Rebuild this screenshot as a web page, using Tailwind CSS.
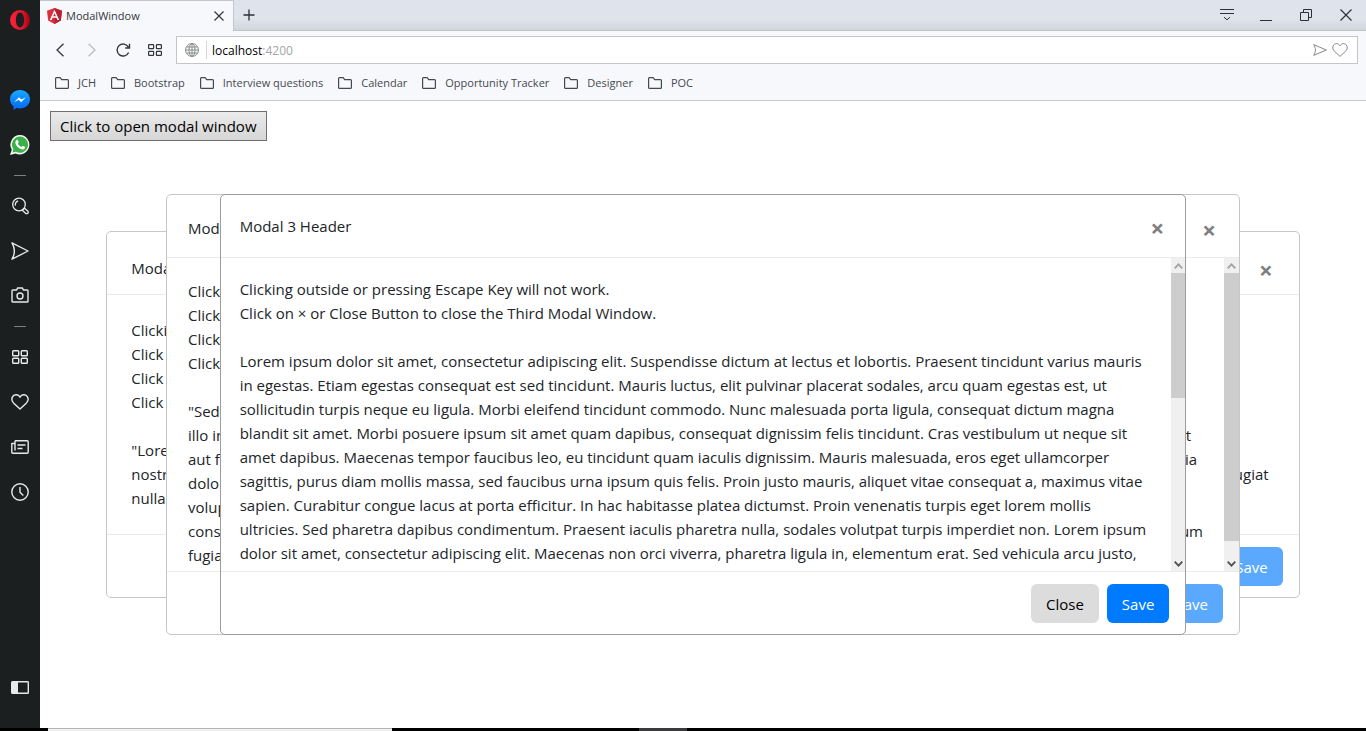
<!DOCTYPE html>
<html lang="en">
<head>
<meta charset="utf-8">
<title>ModalWindow</title>
<script src="https://cdn.jsdelivr.net/npm/@tailwindcss/browser@4"></script>
</head>
<body class="flex h-screen flex-col overflow-hidden bg-white font-['Open_Sans','Noto_Sans',sans-serif] text-[#212529]">
<div class="flex min-h-0 flex-1">

  <!-- Browser sidebar -->
  <nav aria-label="Sidebar" class="flex w-10 shrink-0 flex-col bg-[#1b1f1f] text-[#e8eaea]">
    <button aria-label="Opera menu" class="flex h-10 items-center justify-center">
      <svg width="20" height="20" viewBox="0 0 20 20"><defs><linearGradient id="op" x1="0" y1="0" x2="1" y2="0"><stop offset="0" stop-color="#fb2338"/><stop offset=".6" stop-color="#e3152c"/><stop offset="1" stop-color="#9c0613"/></linearGradient></defs><path fill="url(#op)" fill-rule="evenodd" d="M10 0a10 10 0 1 0 0 20 10 10 0 0 0 0-20zm0 2.600c2.300 0 4.100 3.200 4.100 7.400s-1.800 7.400-4.100 7.400S5.900 14.200 5.900 10 7.700 2.600 10 2.600z"/></svg>
    </button>
    <div class="h-[37px]"></div>
    <button aria-label="Messenger" class="flex h-[45px] items-center justify-center">
      <svg width="20" height="20" viewBox="0 0 20 20"><defs><linearGradient id="ms" x1="0" y1="0" x2="0" y2="1"><stop offset="0" stop-color="#1aa8ff"/><stop offset="1" stop-color="#0066f5"/></linearGradient></defs><path fill="url(#ms)" d="M10 0C4.400 0 0 4.100 0 9.200c0 2.900 1.300 5.400 3.500 7.100V20l3.300-1.900c1 .3 2.100.4 3.200.4 5.600 0 10-4.100 10-9.300S15.600 0 10 0z"/><path fill="#fff" d="M4.200 12.200 8.900 7.200l2.600 2.400 4.400-2.400-4.700 5-2.500-2.500z"/></svg>
    </button>
    <button aria-label="WhatsApp" class="flex h-[45px] items-center justify-center">
      <svg width="20" height="20" viewBox="0 0 20 20"><path fill="#f4fbf4" d="M10.200 0A9.700 9.700 0 0 0 1.800 14.700L0 20l5.600-1.500A9.700 9.700 0 1 0 10.200 0z"/><path fill="#3cb14a" d="M10.200 1.600a8.100 8.100 0 0 0-6.800 12.600l-1 3.400 3.500-.9a8.100 8.100 0 1 0 4.300-15.100z"/><path fill="#fff" d="M6.400 5.200c.5-.5 1.200-.5 1.400 0l.8 1.800c.2.500-.5 1.100-.8 1.500.8 1.700 2 2.800 3.800 3.500.4-.4.900-1.300 1.400-1.100l1.800.9c.5.300.2 1.200-.2 1.700-.8.900-2 1.100-3.200.7-3-.9-5-3-5.900-5.500-.3-1.300 0-2.600.9-3.500z"/></svg>
    </button>
    <div class="flex h-4 items-center justify-center"><span class="h-px w-3 bg-[#7c8080]"></span></div>
    <button aria-label="Search" class="flex h-[45px] items-center justify-center">
      <svg width="18" height="18" viewBox="0 0 18 18" fill="none" stroke="currentColor" stroke-width="1.300"><circle cx="8" cy="7.500" r="6.300"/><path d="M4.400 8.700c-.5-2.400.7-4.300 2.700-4.700"/><path d="m11.300 13.200 2.100-2 3.300 2.800c.8.700.7 1.600.1 2.200s-1.600.7-2.300 0z"/></svg>
    </button>
    <button aria-label="My Flow" class="flex h-[45px] items-center justify-center">
      <svg width="18" height="18" viewBox="0 0 18 18" fill="none" stroke="currentColor" stroke-width="1.400" stroke-linejoin="round"><path d="M1 .8 17 9 1 17.200C4 12 4 6 1 .8z"/></svg>
    </button>
    <button aria-label="Snapshot" class="flex h-[45px] items-center justify-center pb-[2px]">
      <svg width="18" height="16" viewBox="0 0 18 16" fill="none" stroke="currentColor" stroke-width="1.400" stroke-linejoin="round"><path d="M1.800 3h3.900L6.500 1h5l.8 2h3.900c.5 0 .8.300.8.800v10.400c0 .5-.3.800-.8.800H1.800c-.5 0-.8-.3-.8-.8V3.800c0-.5.3-.8.800-.8z"/><circle cx="9" cy="9" r="3"/></svg>
    </button>
    <div class="flex h-4 items-center justify-center"><span class="h-px w-3 bg-[#7c8080]"></span></div>
    <button aria-label="Speed Dial" class="flex h-[45px] items-center justify-center">
      <svg width="16" height="14" viewBox="0 0 16 14" fill="none" stroke="currentColor" stroke-width="1.400"><rect x=".7" y=".7" width="6" height="5" rx=".8"/><rect x="9.300" y=".7" width="6" height="5" rx=".8"/><rect x=".7" y="8.300" width="6" height="5" rx=".8"/><rect x="9.300" y="8.300" width="6" height="5" rx=".8"/></svg>
    </button>
    <button aria-label="Bookmarks" class="flex h-[45px] items-center justify-center">
      <svg width="18" height="16" viewBox="0 0 18 16" fill="none" stroke="currentColor" stroke-width="1.400" stroke-linejoin="round"><path d="M9 3.200C7.500.2 3.600.1 1.900 2.300.3 4.400.8 7 2.500 8.900L9 15l6.500-6.100c1.700-1.900 2.200-4.500.6-6.600C14.400.1 10.500.2 9 3.200z"/></svg>
    </button>
    <button aria-label="News" class="flex h-[45px] items-center justify-center">
      <svg width="18" height="14" viewBox="0 0 18 14" fill="none" stroke="currentColor" stroke-width="1.400" stroke-linejoin="round"><path d="M4 .8h12.200c.6 0 1 .3 1 1v10.400c0 .6-.4 1-1 1H1.800c-.6 0-1-.4-1-1V3.500H4M4 .8v9.700M6.500 5h8M6.500 8.500h5"/></svg>
    </button>
    <button aria-label="History" class="flex h-[45px] items-center justify-center">
      <svg width="18" height="18" viewBox="0 0 18 18" fill="none" stroke="currentColor" stroke-width="1.400"><circle cx="9" cy="9" r="8.200"/><path d="M9 4v5.200l3.300 3.300"/></svg>
    </button>
    <button aria-label="Toggle sidebar" class="mt-auto mb-[18px] flex h-[45px] items-center justify-center">
      <svg width="18" height="13" viewBox="0 0 18 13"><rect x=".7" y=".7" width="16.600" height="11.600" rx=".8" fill="none" stroke="currentColor" stroke-width="1.400"/><path fill="currentColor" d="M1 1h6v11H1z"/></svg>
    </button>
  </nav>

  <div class="flex min-w-0 flex-1 flex-col">
    <!-- Tab strip -->
    <header class="flex h-[31px] shrink-0 bg-linear-to-b from-[#dfe4ec] from-60% to-[#d0d5db] text-[#2c3038]">
      <div class="flex w-[194px] items-center border-t border-r border-[#c4c8cd] bg-[#f7f8fb] pr-[5px] pl-[7px]">
        <svg width="15" height="16" viewBox="0 0 15 16" class="shrink-0"><path fill="#dd2e3b" d="M7.500 0 15 2.700l-1.200 9.700L7.500 16l-6.300-3.600L0 2.700z"/><path fill="#b52231" d="M7.500 0 15 2.700l-1.200 9.700L7.500 16z"/><path fill="#fff" fill-rule="evenodd" d="m7.500 1.800 4.700 10.300h-1.800l-.9-2.400h-4l-.9 2.400H2.800zm0 3.400L6.100 8.300h2.800z"/></svg>
        <span class="ml-1 flex-1 text-[11px] text-[#33373d]">ModalWindow</span>
        <button aria-label="Close tab" class="p-1"><svg width="10" height="10" viewBox="0 0 10 10" stroke="#33373d" stroke-width="1.200"><path d="m.5.500 9 9M9.500.5l-9 9"/></svg></button>
      </div>
      <div class="flex flex-1 items-center border-b border-[#bfc4c9] pr-[14px] pl-[9px]">
        <button aria-label="New tab"><svg width="12" height="12" viewBox="0 0 12 12" stroke="currentColor" stroke-width="1.300"><path d="M6 .5v11M.5 6h11"/></svg></button>
        <div class="ml-auto flex items-center gap-7">
          <button aria-label="Tab menu" class="-mr-[2px]"><svg width="14" height="12" viewBox="0 0 14 12" fill="none" stroke="currentColor"><path d="M0 .5h14M0 4.500h14M4 8.200l3 2.600 3-2.600"/></svg></button>
          <button aria-label="Minimize"><svg width="12" height="12" viewBox="0 0 12 12" stroke="currentColor"><path d="M0 11.500h12"/></svg></button>
          <button aria-label="Restore"><svg width="12" height="12" viewBox="0 0 12 12" fill="none" stroke="currentColor"><path d="M.5 3.500h8v8h-8zM3.500 3.500v-3h8v8h-3"/></svg></button>
          <button aria-label="Close window"><svg width="12" height="12" viewBox="0 0 12 12" stroke="currentColor" stroke-width="1.200"><path d="m.5.500 11 11M11.500.5l-11 11"/></svg></button>
        </div>
      </div>
    </header>

    <!-- Toolbar -->
    <div class="flex h-[37px] shrink-0 items-center bg-[#f7f8fb] pr-2 text-[#33373d]">
      <div class="flex w-[136px] items-center pl-4">
        <button aria-label="Back" class="w-8"><svg width="8" height="14" viewBox="0 0 8 14" fill="none" stroke="currentColor" stroke-width="1.300"><path d="M7.500.7 1 7l6.500 6.300"/></svg></button>
        <button aria-label="Forward" class="w-7 text-[#b9bcc2]"><svg width="8" height="14" viewBox="0 0 8 14" fill="none" stroke="currentColor" stroke-width="1.300"><path d="M.5.700 7 7 .5 13.300"/></svg></button>
        <button aria-label="Reload" class="w-8"><svg width="15" height="14" viewBox="0 0 15 14" fill="none" stroke="currentColor" stroke-width="1.400"><path d="M12.600 9.500A6 6 0 1 1 12.400 4.200M13.500.8v4.200H9.200"/></svg></button>
        <button aria-label="Speed Dial"><svg width="14" height="12" viewBox="0 0 14 12" fill="none" stroke="currentColor" stroke-width="1.200"><rect x=".6" y=".6" width="5" height="4" rx=".6"/><rect x="8.400" y=".6" width="5" height="4" rx=".6"/><rect x=".6" y="7.400" width="5" height="4" rx=".6"/><rect x="8.400" y="7.400" width="5" height="4" rx=".6"/></svg></button>
      </div>
      <div class="flex h-7 flex-1 items-center border border-[#c3c5c8] bg-white pr-[9px] pl-2 text-[#85888c]">
        <svg width="14" height="14" viewBox="0 0 14 14" fill="none" stroke="currentColor"><circle cx="7" cy="7" r="6.400"/><ellipse cx="7" cy="7" rx="3" ry="6.400"/><path d="M7 .6v12.800M.6 7h12.800M1.500 4h11M1.500 10h11"/></svg>
        <span class="ml-[7px] h-[18px] w-px bg-[#d4d6d8]"></span>
        <div contenteditable="true" role="textbox" aria-label="Address" class="ml-[5px] flex-1 pt-[2px] text-[12px] text-black">localhost<span class="text-[#a3a5a8]">:4200</span></div>
        <button aria-label="Send to My Flow"><svg width="14" height="12" viewBox="0 0 14 12" fill="none" stroke="currentColor" stroke-linejoin="round"><path d="M.7.600 13.300 6 .7 11.400C3 7.500 3 4.500.7.600z"/></svg></button>
        <button aria-label="Add bookmark" class="ml-[5px]"><svg width="16" height="14" viewBox="0 0 16 14" fill="none" stroke="currentColor" stroke-linejoin="round"><path d="M8 2.800C6.600.1 3.200 0 1.600 2 .2 3.900.6 6.300 2.200 8L8 13.400 13.800 8c1.600-1.700 2-4.100.6-6C12.800 0 9.400.1 8 2.800z"/></svg></button>
      </div>
    </div>

    <!-- Bookmarks bar -->
    <nav aria-label="Bookmarks bar" class="flex h-[33px] shrink-0 items-center gap-[15px] border-b border-[#c8cacd] bg-[#f7f8fb] pb-[2px] pl-[15px] text-[11px] text-[#45494f]">
      <svg class="hidden"><symbol id="folder" viewBox="0 0 14 12"><path d="M.6 10.400V1.600c0-.6.3-1 .9-1h3.600l1.600 2h5.800c.6 0 .9.300.9.900v6.900c0 .6-.3 1-.9 1h-11c-.6 0-.9-.4-.9-1z" fill="none" stroke="currentColor" stroke-width="1.200"/></symbol></svg>
      <a href="#" class="flex items-center gap-[9px]"><svg width="14" height="12"><use href="#folder"/></svg>JCH</a>
      <a href="#" class="flex items-center gap-[9px]"><svg width="14" height="12"><use href="#folder"/></svg>Bootstrap</a>
      <a href="#" class="flex items-center gap-[9px]"><svg width="14" height="12"><use href="#folder"/></svg>Interview questions</a>
      <a href="#" class="flex items-center gap-[9px]"><svg width="14" height="12"><use href="#folder"/></svg>Calendar</a>
      <a href="#" class="flex items-center gap-[9px]"><svg width="14" height="12"><use href="#folder"/></svg>Opportunity Tracker</a>
      <a href="#" class="flex items-center gap-[9px]"><svg width="14" height="12"><use href="#folder"/></svg>Designer</a>
      <a href="#" class="flex items-center gap-[9px]"><svg width="14" height="12"><use href="#folder"/></svg>POC</a>
    </nav>

    <!-- Page with its stacked modal windows -->
    <main class="relative min-h-0 flex-1 overflow-hidden text-[15px] leading-6 whitespace-nowrap">
      <button class="mt-[10px] ml-[10px] h-[30px] border border-[#707070] bg-linear-to-b from-[#ebebeb] to-[#d6d6d6] px-[9px] text-black">Click to open modal window</button>

      <div class="absolute inset-0 flex items-center justify-center">
        <section role="dialog" aria-label="Modal 1" class="w-[90%] overflow-hidden rounded-[5px] border border-[#c6c6c6] bg-white">
          <div class="flex h-[63px] items-start justify-between border-b border-[#e9ecef] px-6 pt-6">
            <h2>Modal</h2>
            <button aria-label="Close" class="px-[2px] pt-[2px] text-2xl leading-6 font-bold text-[#7f7f7f]">×</button>
          </div>
          <div class="px-6 pt-[23px] pb-6">
            <p>Clicking<br>Click<br>Click<br>Click</p>
            <div class="mt-6">
              <p>"Lorem</p>
              <p class="flex justify-between pr-[6px]"><span>nostrud</span><span>fugiat</span></p>
              <p>nulla</p>
            </div>
          </div>
          <div class="flex justify-end border-t border-[#e9ecef] px-4 pt-3 pb-[11px]">
            <button disabled class="h-[39px] rounded-md bg-[#5aa9ff] px-[15px] text-white">Save</button>
          </div>
        </section>
      </div>

      <div class="absolute inset-0 flex items-center justify-center">
        <section role="dialog" aria-label="Modal 2" class="w-[81%] overflow-hidden rounded-[5px] border border-[#c6c6c6] bg-white">
          <div class="flex h-[63px] items-start justify-between border-b border-[#e9ecef] px-[21px] pt-[21px]">
            <h2>Modal</h2>
            <button aria-label="Close" class="px-[2px] pt-[2px] text-2xl leading-6 font-bold text-[#7f7f7f]">×</button>
          </div>
          <div class="flex h-[313px]">
            <div class="min-w-0 flex-1 overflow-hidden px-[21px] pt-[21px]">
              <p>Click<br>Click<br>Click<br>Click</p>
              <div class="mt-6">
                <p>"Sed</p>
                <p class="flex justify-between pr-3"><span>illo in</span><span>odit</span></p>
                <p class="flex justify-between pr-[6px]"><span>aut fugit</span><span>quia</span></p>
                <p>dolor</p>
                <p>voluptatem</p>
                <p class="flex justify-between"><span>consequatur</span><span>eum</span></p>
                <p>fugiat</p>
              </div>
            </div>
            <div aria-hidden="true" class="flex w-[15px] flex-col bg-[#f0f0f0]">
              <span class="flex h-[15px] items-center justify-center"><svg width="9" height="6" viewBox="0 0 9 6" fill="none" stroke="#a3a3a3" stroke-width="1.800"><path d="m.7 5.300 3.800-4 3.800 4"/></svg></span>
              <span class="h-[268px] bg-[#cdcdcd]"></span>
              <span class="mt-auto flex h-[15px] items-center justify-center"><svg width="9" height="6" viewBox="0 0 9 6" fill="none" stroke="#505050" stroke-width="1.800"><path d="m.7.700 3.800 4 3.800-4"/></svg></span>
            </div>
          </div>
          <div class="flex justify-end border-t border-[#e9ecef] px-4 pt-3 pb-[11px]">
            <button disabled class="h-[39px] rounded-md bg-[#5aa9ff] px-[15px] text-white">Save</button>
          </div>
        </section>
      </div>

      <div class="absolute inset-0 flex items-center justify-center">
        <section role="dialog" aria-label="Modal 3" class="w-[72.9%] overflow-hidden rounded-[5px] border border-[#9c9c9c] bg-white">
          <div class="flex h-[63px] items-start justify-between border-b border-[#e9ecef] px-[19px] pt-[19px]">
            <h2>Modal 3 Header</h2>
            <button aria-label="Close" class="px-[2px] pt-[2px] text-2xl leading-6 font-bold text-[#7f7f7f]">×</button>
          </div>
          <div class="flex h-[313px]">
            <div class="min-w-0 flex-1 overflow-hidden px-[19px] pt-[19px]">
              <p>Clicking outside or pressing Escape Key will not work.<br>Click on × or Close Button to close the Third Modal Window.</p>
              <p class="mt-6">Lorem ipsum dolor sit amet, consectetur adipiscing elit. Suspendisse dictum at lectus et lobortis. Praesent tincidunt varius mauris<br>in egestas. Etiam egestas consequat est sed tincidunt. Mauris luctus, elit pulvinar placerat sodales, arcu quam egestas est, ut<br>sollicitudin turpis neque eu ligula. Morbi eleifend tincidunt commodo. Nunc malesuada porta ligula, consequat dictum magna<br>blandit sit amet. Morbi posuere ipsum sit amet quam dapibus, consequat dignissim felis tincidunt. Cras vestibulum ut neque sit<br>amet dapibus. Maecenas tempor faucibus leo, eu tincidunt quam iaculis dignissim. Mauris malesuada, eros eget ullamcorper<br>sagittis, purus diam mollis massa, sed faucibus urna ipsum quis felis. Proin justo mauris, aliquet vitae consequat a, maximus vitae<br>sapien. Curabitur congue lacus at porta efficitur. In hac habitasse platea dictumst. Proin venenatis turpis eget lorem mollis<br>ultricies. Sed pharetra dapibus condimentum. Praesent iaculis pharetra nulla, sodales volutpat turpis imperdiet non. Lorem ipsum<br>dolor sit amet, consectetur adipiscing elit. Maecenas non orci viverra, pharetra ligula in, elementum erat. Sed vehicula arcu justo,</p>
            </div>
            <div aria-hidden="true" class="flex w-[14px] flex-col bg-[#f0f0f0]">
              <span class="flex h-[15px] items-center justify-center"><svg width="9" height="6" viewBox="0 0 9 6" fill="none" stroke="#a3a3a3" stroke-width="1.800"><path d="m.7 5.300 3.800-4 3.800 4"/></svg></span>
              <span class="h-[125px] bg-[#cdcdcd]"></span>
              <span class="mt-auto flex h-[15px] items-center justify-center"><svg width="9" height="6" viewBox="0 0 9 6" fill="none" stroke="#505050" stroke-width="1.800"><path d="m.7.700 3.800 4 3.800-4"/></svg></span>
            </div>
          </div>
          <div class="flex justify-end gap-2 border-t border-[#e9ecef] px-4 pt-3 pb-[11px]">
            <button class="h-[39px] rounded-md bg-[#dcdcdc] px-[15px] text-black">Close</button>
            <button class="h-[39px] rounded-md bg-[#007bff] px-[15px] text-white">Save</button>
          </div>
        </section>
      </div>
    </main>
  </div>
</div>

<!-- Top edge of the desktop taskbar -->
<div aria-hidden="true" class="flex h-[3px] shrink-0 bg-black">
  <span class="ml-12 w-[344px] border-t border-[#b5b5b5] bg-[#f0f0f0]"></span>
  <span class="ml-[247px] w-12 bg-[#3a3a3c]"></span>
</div>
</body>
</html>
